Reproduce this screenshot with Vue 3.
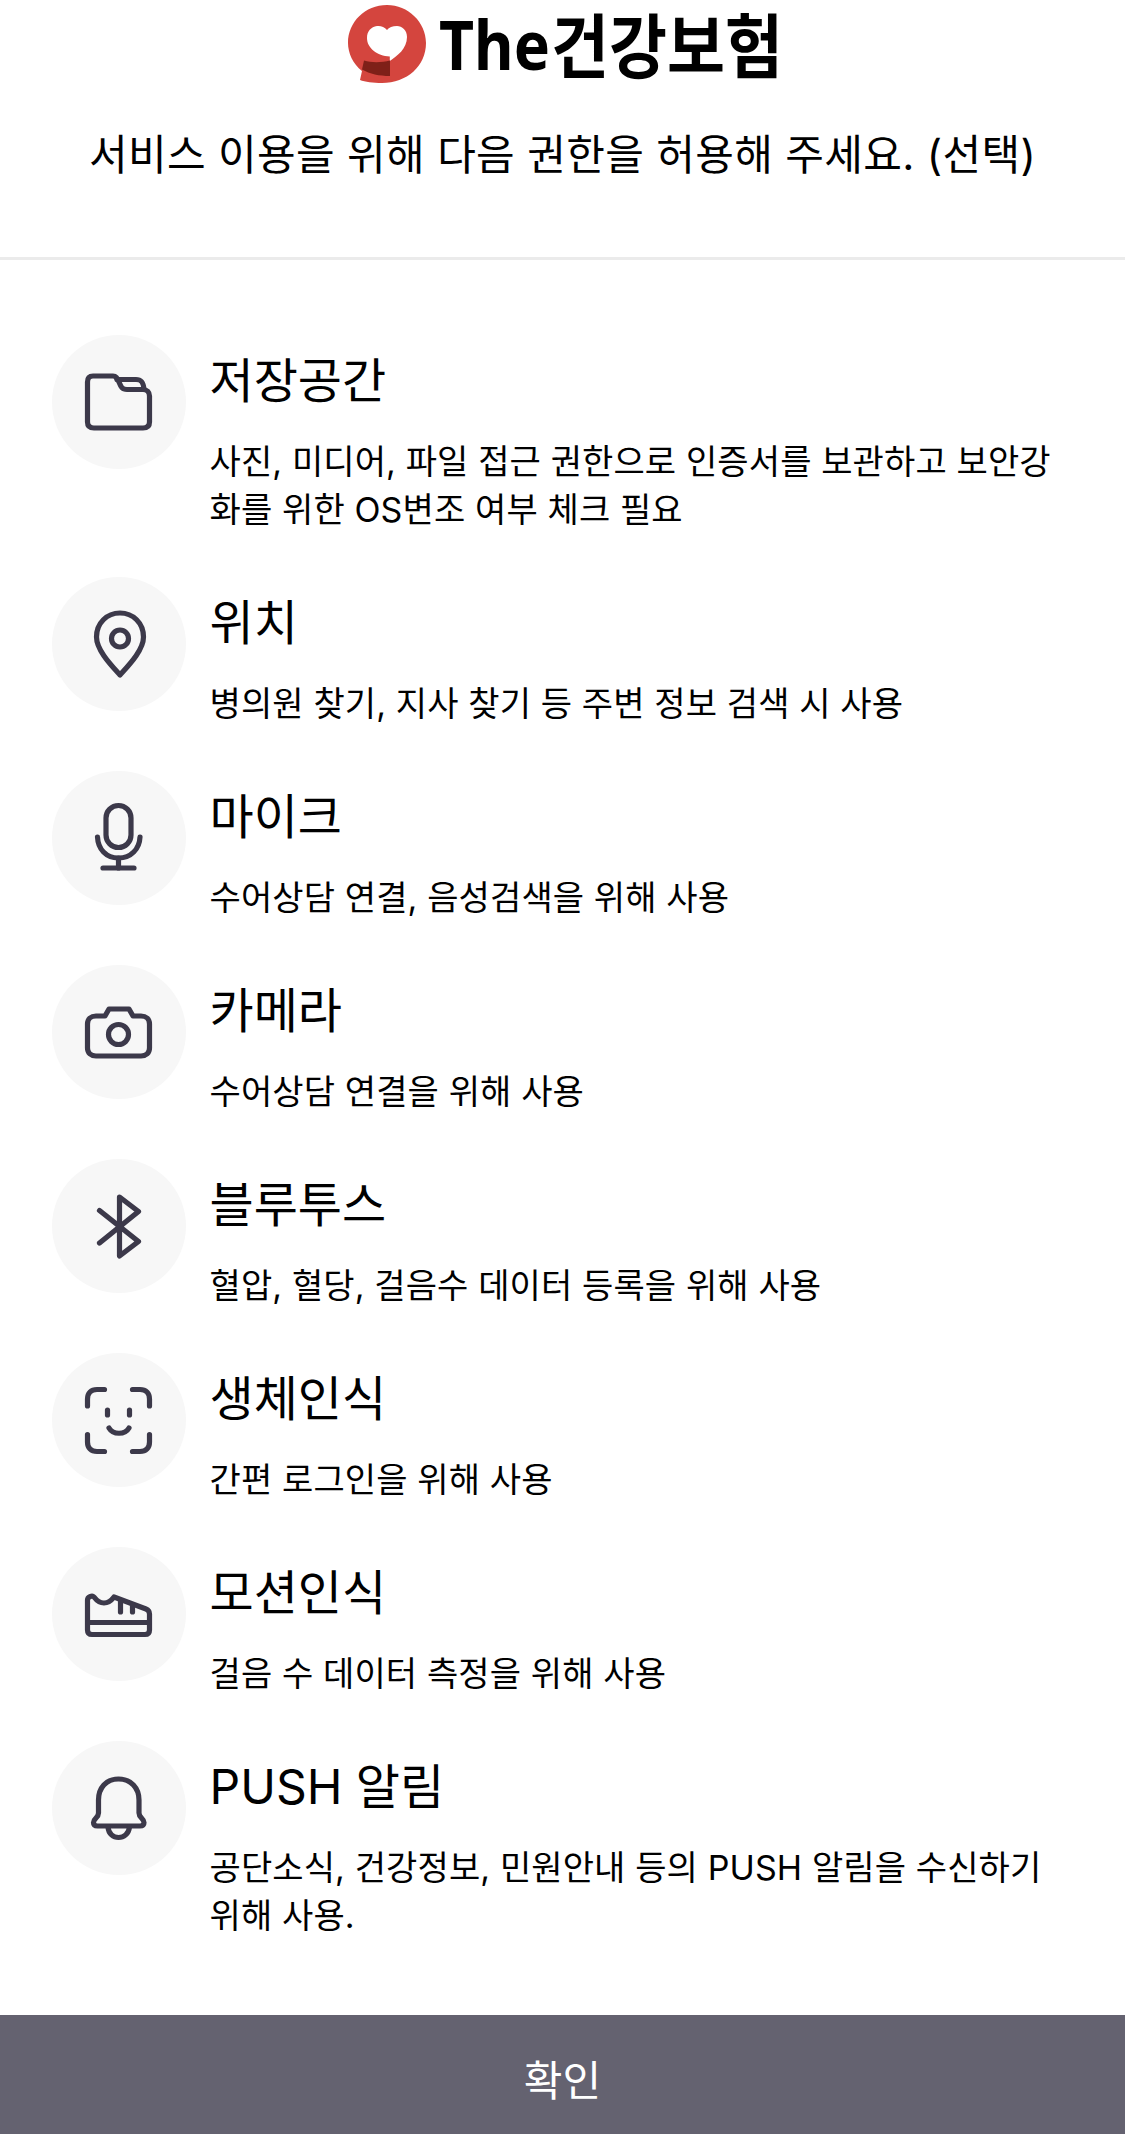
<template>
  <div class="page">
    <header class="header">
      <svg class="logo" viewBox="0 0 440 90" role="img" aria-label="The건강보험">
        <path d="M39 5C60 5 78 22 78 43C78 66 59 83 34 83C25 83 17 82 12 80L14 71C5 64 0 53 0 43C0 22 17 5 39 5Z" fill="#d4453e" />
        <path d="M39 30C36.500 26.500 32 25.500 29 26C23 27 19 31 19 38C19 48 29 56 41.800 56.500V61C49 56 59 49 59 37C59 30 54 26 49 26C44.500 26 41 27.500 39 30Z" fill="#fff" />
        <path d="M16 60.500C24 63 34 62.500 42 60.500V76C31 76 22 74 14 69.500Z" fill="#7f2018" />
        <text class="logo-text logo-latin" x="91" y="70" font-size="68" textLength="111" lengthAdjust="spacingAndGlyphs">The</text>
        <text class="logo-text" x="203" y="73" font-size="70" textLength="232" lengthAdjust="spacingAndGlyphs">건강보험</text>
      </svg>
      <p class="guide">서비스 이용을 위해 다음 권한을 허용해 주세요. (선택)</p>
    </header>

    <ul class="list">
      <li v-for="item in permissions" :key="item.title" class="item">
        <div class="icon">
          <svg viewBox="0 0 134 134">
            <path v-for="d in item.paths" :key="d" :d="d" />
          </svg>
        </div>
        <div class="info">
          <div class="title">{{ item.title }}</div>
          <div class="desc">
            <div v-for="line in item.lines" :key="line">{{ line }}</div>
          </div>
        </div>
      </li>
    </ul>

    <button class="btn-confirm">확인</button>
  </div>
</template>

<script setup>
const permissions = [
  {
    title: '저장공간',
    lines: ['사진, 미디어, 파일 접근 권한으로 인증서를 보관하고 보안강', '화를 위한 OS변조 여부 체크 필요'],
    paths: [
      'M41 41H61C64 41 65 43 67 47C69 52 70 54.500 75 54.500H91C95 54.500 97.500 57 97.500 61V87C97.500 91 95 93 91 93H42C38 93 35.500 91 35.500 87V47C35.500 43 37.500 41 41 41Z',
      'M65 44.500H84C90 44.500 91.500 48 92 54.500'
    ]
  },
  {
    title: '위치',
    lines: ['병의원 찾기, 지사 찾기 등 주변 정보 검색 시 사용'],
    paths: [
      'M68 98C59 88 44.500 73 44.500 60C44.500 46 55 36 68 36C81 36 91.500 46 91.500 60C91.500 73 77 88 68 98Z',
      'M76.500 61.500a8.500 8.500 0 1 1-17 0a8.500 8.500 0 1 1 17 0Z'
    ]
  },
  {
    title: '마이크',
    lines: ['수어상담 연결, 음성검색을 위해 사용'],
    paths: [
      'M54 47A12.500 12.500 0 0 1 79 47V64A12.500 12.500 0 0 1 54 64Z',
      'M45.500 66C46 78 54 87 66.500 87C79 87 87.500 78 88 66',
      'M66.500 87V97',
      'M51 97H82'
    ]
  },
  {
    title: '카메라',
    lines: ['수어상담 연결을 위해 사용'],
    paths: [
      'M44 51H53L57 44H77L81 51H89C94 51 97.500 54 97.500 59V83C97.500 88 94 91 89 91H44C39 91 35.500 88 35.500 83V59C35.500 54 39 51 44 51Z',
      'M76.500 69.500a10 10 0 1 1-20 0a10 10 0 1 1 20 0Z'
    ]
  },
  {
    title: '블루투스',
    lines: ['혈압, 혈당, 걸음수 데이터 등록을 위해 사용'],
    paths: ['M47.500 51.500L86.500 82.500L67.500 97V38L86.500 52.500L47.500 84']
  },
  {
    title: '생체인식',
    lines: ['간편 로그인을 위해 사용'],
    paths: [
      'M35.500 53V46C35.500 40 39 36.500 45 36.500H52.500',
      'M80.500 36.500H88C94 36.500 97.500 40 97.500 46V53',
      'M35.500 81.500V89C35.500 95 39 98.500 45 98.500H52.500',
      'M80.500 98.500H88C94 98.500 97.500 95 97.500 89V81.500',
      'M55.500 57V62',
      'M77.500 57V62',
      'M57 75C61 82 73 82 77 75'
    ]
  },
  {
    title: '모션인식',
    lines: ['걸음 수 데이터 측정을 위해 사용'],
    paths: [
      'M35.500 53C35.500 50 40 48 42 50C48 58 56 58 62 50L94 62C96.500 63 97.500 65 97.500 67V83C97.500 86 96 87.500 93 87.500H40C37 87.500 35.500 86 35.500 83Z',
      'M36 75.500H97',
      'M68.500 54V65',
      'M80.500 58V65'
    ]
  },
  {
    title: 'PUSH 알림',
    lines: ['공단소식, 건강정보, 민원안내 등의 PUSH 알림을 수신하기', '위해 사용.'],
    paths: [
      'M66.500 38C54 38 46.500 47 46.500 59V72C46.500 77 41.500 77 41.500 81.500C41.500 84 43 85 45.500 85H88C90.500 85 92 84 92 81.500C92 77 87 77 87 72V59C87 47 79 38 66.500 38Z',
      'M56 86C57 100 76 100 77.500 86'
    ]
  }
]
</script>

<style>
body {
  margin: 0;
}
</style>

<style scoped>
.page {
  display: flex;
  flex-direction: column;
  height: 2134px;
  background: #fff;
  color: #000;
  font-family: Inter, "Noto Sans CJK KR", sans-serif;
}

.header {
  display: flex;
  flex-direction: column;
  align-items: center;
  height: 257px;
  border-bottom: 3px solid #ebebeb;
}

.logo {
  width: 440px;
  height: 90px;
  margin-left: 11px;
  overflow: visible;
}

.logo-text {
  font-family: "Noto Sans CJK KR", sans-serif;
  font-weight: 700;
}

.logo-latin {
  font-family: "Noto Sans", sans-serif;
}

.guide {
  margin: 35px 0 0;
  font-size: 42px;
  line-height: 60px;
  letter-spacing: 0.33px;
  white-space: nowrap;
}

.list {
  flex: 1;
  margin: 0;
  padding: 75px 0 0 51.5px;
  list-style: none;
}

.item {
  display: flex;
  gap: 24px;
  padding-bottom: 36px;
}

.icon {
  width: 134px;
  height: 134px;
  border-radius: 50%;
  background: #f7f7f7;
}

.icon svg {
  display: block;
  fill: none;
  stroke: #3c394a;
  stroke-width: 5.2;
  stroke-linecap: round;
  stroke-linejoin: round;
}

.title {
  padding-top: 11px;
  font-size: 48px;
  line-height: 70px;
}

.desc {
  padding-top: 22px;
  font-size: 34px;
  line-height: 48px;
  letter-spacing: 0.12px;
  white-space: nowrap;
  margin-bottom: 7px;
}

.btn-confirm {
  height: 119px;
  padding: 6px 0 0;
  border: none;
  background: #646270;
  color: #fff;
  font-family: inherit;
  font-size: 42px;
}
</style>
